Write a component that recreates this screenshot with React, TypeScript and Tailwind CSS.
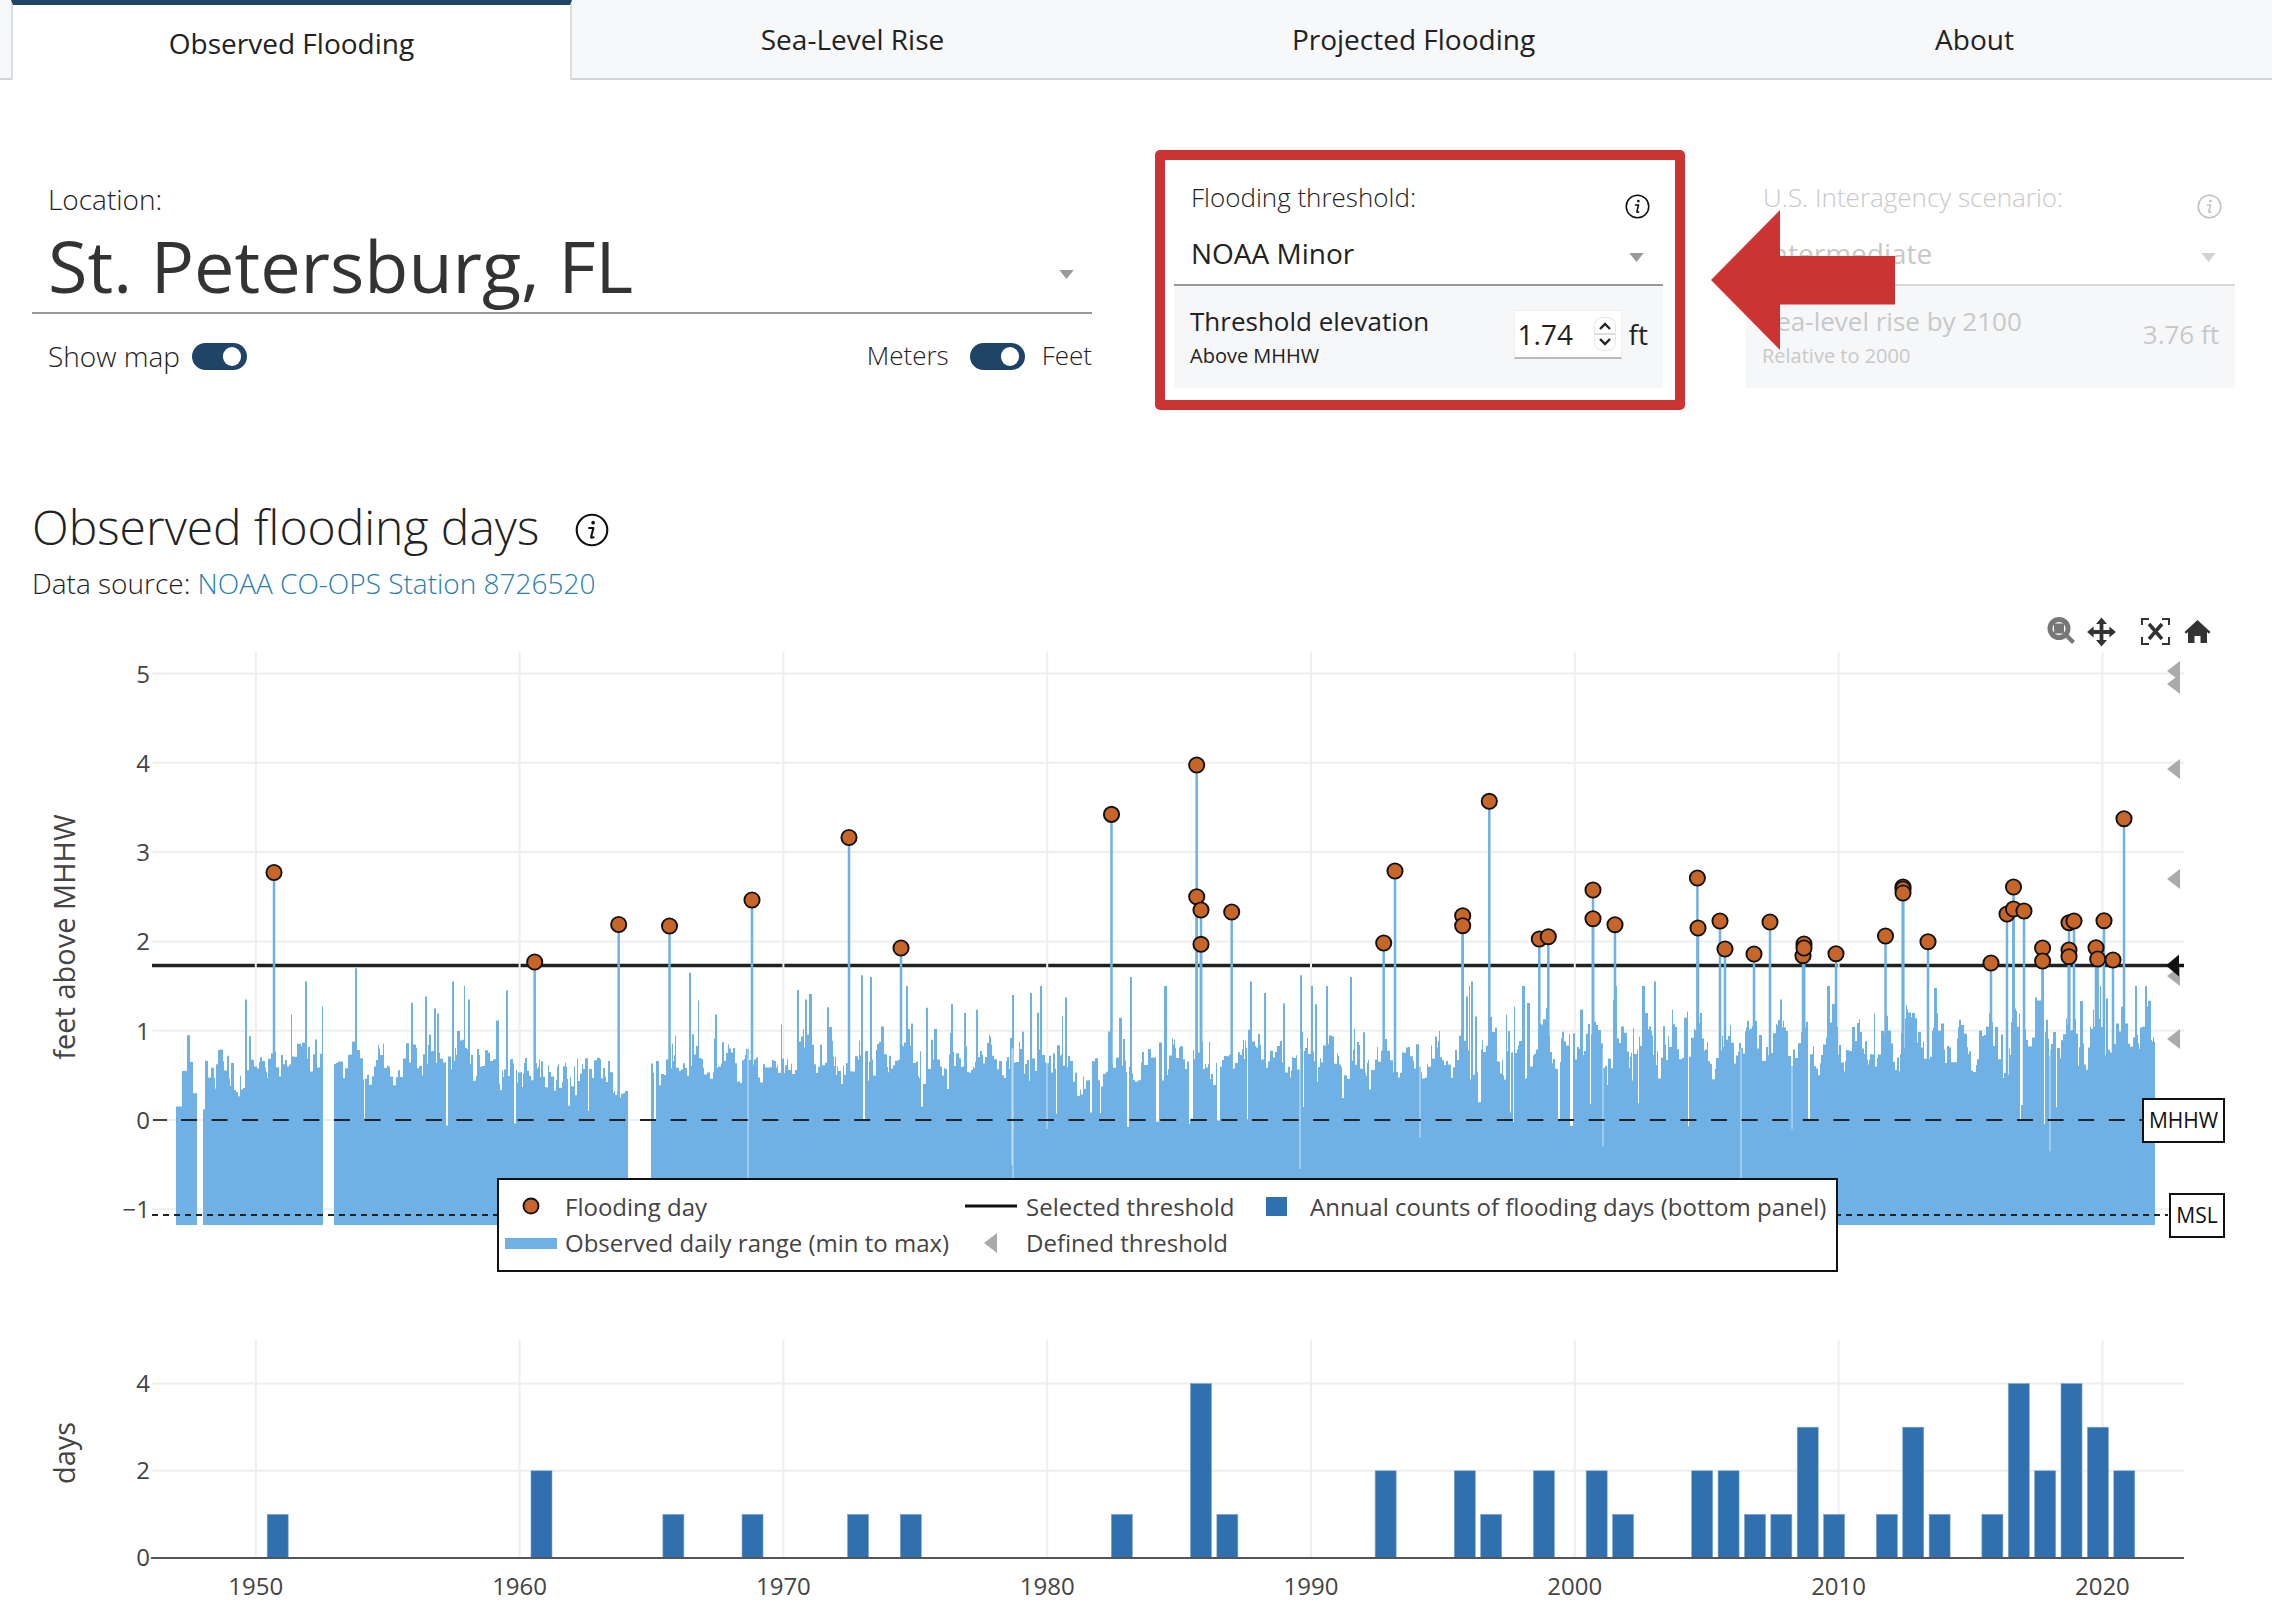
import React, { useMemo } from "react";

const FONT = "font-['Open_Sans','Noto_Sans',sans-serif]";
const X = (yr: number) => 255.8 + (yr - 1950) * 26.38;
const Y = (v: number) => 1120 - 89.3 * v;
const YB = (v: number) => 1558 - 43.6 * v;

const DOTS: [number, number][] = [
  [274, 872.5], [534.7, 962], [618.7, 924.5], [669.5, 926], [752, 900], [849, 837.5], [901, 948], [1111.5, 814.4],
  [1196.7, 765], [1196.7, 896.7], [1201, 910], [1201, 944.3], [1231.7, 912], [1383.7, 943], [1395, 871],
  [1462.7, 915.7], [1462.7, 925.7], [1489.3, 801.3], [1539.3, 939], [1548.3, 936.7], [1593, 890], [1593, 918.7],
  [1615, 924.7], [1697.4, 878], [1698, 928], [1720, 921], [1725, 949], [1754, 954], [1770, 922], [1804, 944],
  [1803, 955.7], [1804, 948], [1836, 953.7], [1885.5, 936], [1903, 887], [1903, 889], [1903, 893], [1928, 941.7],
  [1991, 963], [2007, 914], [2013.5, 887], [2013.5, 909], [2024, 911], [2042.6, 948], [2042.6, 961], [2069, 922.7],
  [2074, 921], [2069, 950], [2069, 956.7], [2096, 947.7], [2097.7, 959], [2113, 960], [2104, 920.7], [2124, 818.7],
];

const BARS: [number, number][] = [
  [1951, 1], [1961, 2], [1966, 1], [1969, 1], [1973, 1], [1975, 1], [1983, 1], [1986, 4], [1987, 1], [1993, 2],
  [1996, 2], [1997, 1], [1999, 2], [2001, 2], [2002, 1], [2005, 2], [2006, 2], [2007, 1], [2008, 1], [2009, 3],
  [2010, 1], [2012, 1], [2013, 3], [2014, 1], [2016, 1], [2017, 4], [2018, 2], [2019, 4], [2020, 3], [2021, 2],
];

const SEGMENTS: [number, number][] = [[176, 197], [203, 323], [334, 628], [651, 2155]];
const TRIANGLES = [671, 684, 769, 879, 976, 1039];
const SPIKES: [number, number][] = [
  [245, 1.35], [273, 1.2], [305, 1.55], [355, 1.7], [434, 1.25], [452, 1.55], [468, 1.35], [506, 1.45], [689, 1.65],
  [805, 1.35], [861, 1.62], [870, 1.6], [951, 1.3], [1012, 1.4], [1040, 1.5], [1037, 1.2], [1130, 1.6], [1250, 1.55],
  [1300, 1.62], [1350, 1.6], [1471, 1.55], [1654, 1.55], [1780, 1.35], [2135, 1.5], [2145, 1.5],
];
const SLITS: [number, number][] = [
  [748, -0.9], [1013, -0.9], [1603, -0.3], [1741, -1.3], [1792, -0.1], [1047, -0.1], [2050, -0.35], [1012, -0.5],
  [1300, -0.55], [1420, -0.2],
];

function buildSeries() {
  let s = 48271;
  const r = () => {
    s = (s + 0x6d2b79f5) | 0;
    let t = Math.imul(s ^ (s >>> 15), 1 | s);
    t = (t + Math.imul(t ^ (t >>> 7), 61 | t)) ^ t;
    return ((t ^ (t >>> 14)) >>> 0) / 4294967296;
  };
  let d = "";
  let slow = 0;
  for (const [a, b] of SEGMENTS) {
    let x = a;
    while (x < b) {
      const w = Math.min(1 + Math.floor(r() * 2.6), b - x);
      const yr = (x - 255.8) / 26.38;
      const late = Math.max(0, Math.min(1, (x - 1000) / 1100));
      const trend = 0.62 + 0.32 * late;
      const season = Math.cos((yr - 0.72) * 2 * Math.PI);
      const k = r();
      slow = slow * 0.86 + (r() - 0.5) * 0.14;
      let v = trend + season * (0.1 + 0.16 * late) + slow + (r() - 0.5) * 0.3;
      if (k < 0.1) v += 0.2 + r() * 0.45;
      if (k < 0.025) v += 0.1 + r() * 0.3;
      if (k > 0.975) v = -0.1 + r() * 0.35;
      if (x < 197) v = x < 181 ? 0.15 : x < 186 ? 0.55 : x < 189 ? 0.95 : x < 192 ? 0.65 : 0.3;
      if (x >= 203 && x < 205) v = 0.12;
      if (x > 610 && x < 628) v = 0.22 + r() * 0.12;
      if (x > 2148) v = 0.75 + r() * 0.25;
      v = Math.min(v, 1.5);
      d += `M${x} 1225V${Y(v).toFixed(1)}H${x + w}V1225Z`;
      x += w;
    }
  }
  for (const [x, v] of SPIKES) d += `M${x} 1225V${Y(v).toFixed(1)}h2V1225Z`;
  return d;
}

function InfoIcon({ className }: { className: string }) {
  return (
    <svg viewBox="0 0 24 24" className={className} fill="none" stroke="currentColor">
      <circle cx="12" cy="12" r="10.8" strokeWidth="1.5" />
      <circle cx="12.8" cy="6.8" r="1.3" fill="currentColor" stroke="none" />
      <path d="M10 10.6h3l-1.6 6.2c-.2.7.3.9 1.7.4" strokeWidth="1.5" strokeLinecap="round" strokeLinejoin="round" />
    </svg>
  );
}

function Caret({ className }: { className: string }) {
  return (
    <svg viewBox="0 0 16 10" className={className}>
      <path d="M0 0H16L8 10Z" fill="currentColor" />
    </svg>
  );
}

function Toggle() {
  return (
    <span className="flex h-[27px] w-[55px] items-center justify-end rounded-full bg-[#1f4466] pr-[6px]">
      <span className="h-[19px] w-[18px] rounded-full bg-white" />
    </span>
  );
}

function Tab({ children, active }: { children: React.ReactNode; active?: boolean }) {
  return active ? (
    <div className="flex h-[80px] w-[561px] items-start justify-center border-x-2 border-t-[5px] border-x-[#dcdde0] border-t-[#1f4466] bg-white pt-[17px] text-[#222]">
      {children}
    </div>
  ) : (
    <div className="flex h-[80px] w-[561px] items-start justify-center border-b-2 border-[#d2d3d6] bg-[#f7f8fa] pt-[18px] text-[#222]">
      {children}
    </div>
  );
}

function Chart() {
  const series = useMemo(buildSeries, []);
  const decades = [1950, 1960, 1970, 1980, 1990, 2000, 2010, 2020];
  const sans = "'Open Sans', sans-serif";
  return (
    <svg viewBox="0 603 2272 1021" className="block h-[1021px] w-[2272px]" fontFamily={sans}>
      {/* mode bar */}
      <g fill="#777" stroke="none">
        <circle cx="2059" cy="628.5" r="9" fill="none" stroke="#777" strokeWidth="5" />
        <rect x="2054" y="623.5" width="10" height="10" />
        <path d="M2064 636l3-3 8 8-3 3z" />
      </g>
      <path
        fill="#333"
        d="M2101.5 617.5l5.5 6.5h-3.6v6h6v-3.6l6.5 5.5-6.5 5.5V634h-6v6h3.6l-5.5 6.5-5.5-6.5h3.6v-6h-6v3.4l-6.5-5.5 6.5-5.5v3.6h6v-6H2096z"
      />
      <g stroke="#333" strokeWidth="2" fill="none">
        <path d="M2142 625v-6h7M2162 619h7v6M2142 637v7h7M2162 644h7v-7" />
        <path d="M2149 624l13 15M2162 624l-13 15" strokeWidth="3.5" />
      </g>
      <path fill="#333" d="M2197.5 620l13 12-1.6 1.8-1.9-1.7V643h-6.5v-7h-6v7H2188v-10.9l-1.9 1.7-1.6-1.8z" />

      {/* grid */}
      {[5, 4, 3, 2, 1, 0, -1].map((v) => (
        <line key={v} x1="152" x2="2184" y1={Y(v)} y2={Y(v)} stroke="#eeeeee" strokeWidth="2" />
      ))}
      <line x1="152" x2="2184" y1="965.5" y2="965.5" stroke="#222" strokeWidth="3.5" />
      {decades.map((d) => (
        <line key={d} x1={X(d)} x2={X(d)} y1="652" y2="1225" stroke="#eeeeee" strokeWidth="2" />
      ))}

      {/* gray defined threshold markers */}
      {TRIANGLES.map((y) => (
        <path key={y} d={`M2167 ${y}l13-10v20z`} fill="#aaa" />
      ))}

      {/* stems */}
      {DOTS.map(([x, y], i) => (
        <line key={i} x1={x} x2={x} y1={y} y2={1120} stroke="#6fb1e4" strokeWidth="2.5" />
      ))}
      <path d={series} fill="#6fb1e4" />
      {SLITS.map(([x, v], i) => (
        <line key={i} x1={x} x2={x} y1={Y(0.8)} y2={Y(v)} stroke="#ffffff" strokeOpacity="0.55" strokeWidth="1.2" />
      ))}

      {/* reference lines */}
      <line x1="181" x2="2142" y1="1120" y2="1120" stroke="#222" strokeWidth="2" strokeDasharray="16 14.6" />
      <line x1="152" x2="2168" y1="1215" y2="1215" stroke="#222" strokeWidth="2" strokeDasharray="6 5" />
      <path d="M2166 965.5l13-11v22z" fill="#111" />
      <line x1="2170" x2="2184" y1="965.5" y2="965.5" stroke="#111" strokeWidth="3" />

      {/* dots */}
      {DOTS.map(([x, y], i) => (
        <circle key={i} cx={x} cy={y} r="7.6" fill="#c86629" stroke="#111" strokeWidth="1.9" />
      ))}

      {/* y axis main */}
      <g fill="#444" fontSize="24" textAnchor="end">
        {[5, 4, 3, 2, 1, 0].map((v) => (
          <text key={v} x="150" y={Y(v) + 9}>{v}</text>
        ))}
        <text x="150" y={Y(-1) + 9}>−1</text>
      </g>
      <line x1="153" x2="167" y1="1120" y2="1120" stroke="#444" strokeWidth="2" />
      <text transform="translate(75 937) rotate(-90)" textAnchor="middle" fontSize="29" fill="#444">
        feet above MHHW
      </text>

      {/* Annotations */}
      <rect x="2143" y="1099" width="81" height="43" fill="#fff" stroke="#111" strokeWidth="2" />
      <text x="2183.5" y="1128" textAnchor="middle" fontSize="21" fill="#111">MHHW</text>
      <rect x="2170" y="1194" width="54" height="43" fill="#fff" stroke="#111" strokeWidth="2" />
      <text x="2197" y="1223" textAnchor="middle" fontSize="21" fill="#111">MSL</text>

      {/* legend */}
      <rect x="498" y="1179" width="1339" height="92" fill="#fff" stroke="#111" strokeWidth="2" />
      <circle cx="531" cy="1206" r="7.5" fill="#c86629" stroke="#111" strokeWidth="1.9" />
      <rect x="505" y="1238" width="52" height="11" fill="#6fb1e4" />
      <line x1="965" x2="1017" y1="1206" y2="1206" stroke="#111" strokeWidth="3" />
      <path d="M984 1243l13-10v20z" fill="#aaa" />
      <rect x="1266" y="1197" width="21" height="19" fill="#3070ae" />
      <g fontSize="24" fill="#444">
        <text x="565" y="1216">Flooding day</text>
        <text x="565" y="1252">Observed daily range (min to max)</text>
        <text x="1026" y="1216">Selected threshold</text>
        <text x="1026" y="1252">Defined threshold</text>
        <text x="1310" y="1216">Annual counts of flooding days (bottom panel)</text>
      </g>

      {/* bottom panel */}
      {[4, 2].map((v) => (
        <line key={v} x1="152" x2="2184" y1={YB(v)} y2={YB(v)} stroke="#eeeeee" strokeWidth="2" />
      ))}
      {decades.map((d) => (
        <line key={d} x1={X(d)} x2={X(d)} y1="1340" y2="1558" stroke="#eeeeee" strokeWidth="2" />
      ))}
      {BARS.map(([yr, v]) => (
        <rect key={yr} x={X(yr) - 15} y={YB(v)} width="21" height={v * 43.6} fill="#3070ae" stroke="#7ca5cd" strokeWidth="0.6" />
      ))}
      <line x1="151" x2="2184" y1="1558" y2="1558" stroke="#555" strokeWidth="2" />
      <g fill="#444" fontSize="24" textAnchor="end">
        <text x="150" y="1392">4</text>
        <text x="150" y="1479">2</text>
        <text x="150" y="1566">0</text>
      </g>
      <g fill="#444" fontSize="24" textAnchor="middle">
        {decades.map((d) => (
          <text key={d} x={X(d)} y="1595">{d}</text>
        ))}
      </g>
      <text transform="translate(75 1453) rotate(-90)" textAnchor="middle" fontSize="29" fill="#444">days</text>
    </svg>
  );
}

export default function App() {
  return (
    <div className={`${FONT} relative h-[1624px] w-[2272px] overflow-hidden bg-white text-[#333]`}>
      <div className="flex text-[28px]">
        <div className="h-[80px] w-[11px] border-b-2 border-[#d2d3d6] bg-[#f7f8fa]" />
        <Tab active>Observed Flooding</Tab>
        <Tab>Sea-Level Rise</Tab>
        <Tab>Projected Flooding</Tab>
        <Tab>About</Tab>
        <div className="h-[80px] flex-1 border-b-2 border-[#d2d3d6] bg-[#f7f8fa]" />
      </div>

      <div className="mt-[70px] flex h-[260px]">
        <div className="ml-[32px] w-[1060px]">
          <div className="pl-[16px] pt-[29px] text-[28px] font-light leading-[40px] text-[#222]">Location:</div>
          <div className="relative h-[95px] border-b-2 border-[#999] pl-[16px] text-[72px] leading-[92px] text-[#333]">
            St. Petersburg, FL
            <Caret className="absolute right-[18px] top-[51px] h-[9px] w-[15px] text-[#999]" />
          </div>
          <div className="flex h-[84px] items-center text-[26px] font-light text-[#222]">
            <span className="pl-[16px] text-[28px]">Show map</span>
            <span className="ml-[12px]"><Toggle /></span>
            <span className="-mt-[2px] ml-auto">Meters</span>
            <span className="ml-[21px]"><Toggle /></span>
            <span className="-mt-[2px] ml-[17px]">Feet</span>
          </div>
        </div>

        <div className="ml-[63px] h-[260px] w-[530px] rounded-[5px] border-[10px] border-[#cc3333]">
          <Scenario
            label="Flooding threshold:"
            select="NOAA Minor"
            title="Threshold elevation"
            sub="Above MHHW"
            value={
              <div className="-mr-[1px] flex items-center">
                <div className="flex h-[49px] w-[108px] items-center justify-between border border-b-2 border-[#eee] border-b-[#bbb] bg-white pl-[3px] pr-[5px] text-[28px] text-[#222]">
                  1.74
                  <svg viewBox="0 0 22 34" className="h-[34px] w-[22px]">
                    <rect x="0.5" y="0.5" width="21" height="33" rx="8" fill="#fff" stroke="#e6e6e6" />
                    <line x1="1" x2="21" y1="17" y2="17" stroke="#ddd" strokeWidth="2" />
                    <path d="M6 12L11 7l5 5M6 22l5 5 5-5" fill="none" stroke="#222" strokeWidth="2.4" />
                  </svg>
                </div>
                <span className="ml-[7px] text-[28px] text-[#222]">ft</span>
              </div>
            }
            textColor="text-[#222]"
            lineColor="border-[#999]"
            caretColor="text-[#999]"
            infoColor="text-[#111]"
          />
        </div>

        <div className="ml-[42px] mt-[10px] h-[240px] w-[510px] pl-[10px]">
          <Scenario
            label="U.S. Interagency scenario:"
            select="Intermediate"
            title="Sea-level rise by 2100"
            sub="Relative to 2000"
            value={<span className="text-[26px] text-[#c8c8c8]">3.76 ft</span>}
            textColor="text-[#c8c8c8]"
            lineColor="border-[#d8d8d8]"
            caretColor="text-[#d2d2d2]"
            infoColor="text-[#c0c0c0]"
          />
        </div>
      </div>

      <svg viewBox="0 0 190 144" className="absolute left-[1708px] top-[208px] h-[144px] w-[190px]">
        <path d="M3 72L72 2V48H187V96.5H72V142Z" fill="#cc3333" />
      </svg>

      <div className="ml-[32px] mt-[83px] flex h-[68px] items-center text-[48px] font-light leading-[68px] text-[#222]">
        Observed flooding days
        <InfoIcon className="ml-[36px] mt-[5px] h-[34px] w-[34px] text-[#111]" />
      </div>
      <div className="ml-[32px] mt-[3px] h-[39px] text-[28px] font-light leading-[38px] text-[#222]">
        Data source: <span className="text-[#2a7fb0]">NOAA CO-OPS Station 8726520</span>
      </div>
      <Chart />
    </div>
  );
}

function Scenario(props: {
  label: string;
  select: string;
  title: string;
  sub: string;
  value: React.ReactNode;
  textColor: string;
  lineColor: string;
  caretColor: string;
  infoColor: string;
}) {
  return (
    <div className={`pl-[9px] ${props.textColor}`}>
      <div className={`w-[489px] border-b-2 ${props.lineColor}`}>
        <div className="flex h-[73px] items-start justify-between pl-[17px] pr-[13px] pt-[20px]">
          <span className="text-[26px] font-light leading-[34px]">{props.label}</span>
          <InfoIcon className={`mt-[14px] h-[25px] w-[25px] ${props.infoColor}`} />
        </div>
        <div className="flex h-[51px] items-start justify-between pl-[17px] pr-[19px] text-[28px] leading-[40px]">
          {props.select}
          <Caret className={`mt-[20px] h-[9px] w-[15px] ${props.caretColor}`} />
        </div>
      </div>
      <div className="flex h-[102px] w-[489px] bg-[#f6f7f9] pl-[16px] pr-[16px]">
        <div className="pt-[17px]">
          <div className="text-[26px] leading-[36px]">{props.title}</div>
          <div className="mt-[4px] text-[20px] leading-[26px]">{props.sub}</div>
        </div>
        <div className="ml-auto flex h-[96px] items-center pr-0">{props.value}</div>
      </div>
    </div>
  );
}
